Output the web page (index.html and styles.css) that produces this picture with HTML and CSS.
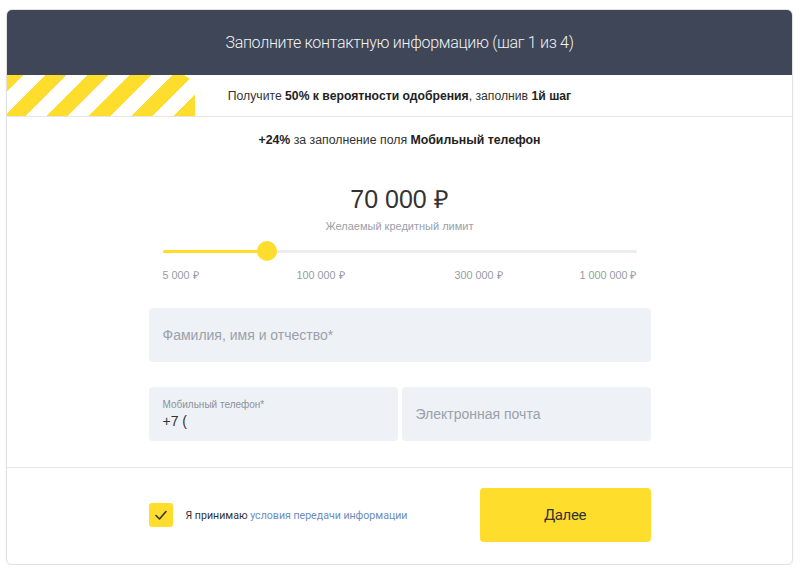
FILE: index.html
```html
<!DOCTYPE html>
<html lang="ru">
<head>
<meta charset="utf-8">
<title>Заполните контактную информацию</title>
<link rel="stylesheet" href="styles.css">
</head>
<body>
<div class="card">
  <div class="header">Заполните контактную информацию (шаг 1 из 4)</div>
  <div class="banner"><span>Получите <b>50% к вероятности одобрения</b>, заполнив <b>1й шаг</b></span></div>
  <div class="main">
    <div class="bonus"><b>+24%</b> за заполнение поля <b>Мобильный телефон</b></div>
    <div class="amount">70 000 ₽</div>
    <div class="amount-label">Желаемый кредитный лимит</div>
    <div class="slider">
      <div class="track"><div class="fill" style="width:22%"></div></div>
      <div class="thumb" style="left:22%"></div>
    </div>
    <div class="ticks">
      <span class="tick t1">5 000 ₽</span>
      <span class="tick t2">100 000 ₽</span>
      <span class="tick t3">300 000 ₽</span>
      <span class="tick t4">1 000 000 ₽</span>
    </div>
    <div class="field field-full"><span class="placeholder">Фамилия, имя и отчество*</span></div>
    <div class="row">
      <div class="field field-filled">
        <span class="field-label">Мобильный телефон*</span>
        <span class="field-value">+7 (</span>
      </div>
      <div class="field"><span class="placeholder">Электронная почта</span></div>
    </div>
  </div>
  <div class="footer">
    <div class="agree">
      <span class="checkbox">
        <svg width="14" height="12" viewBox="0 0 14 12"><polyline points="2,6.5 5.5,10 12,2.5" fill="none" stroke="#333" stroke-width="1.6" stroke-linecap="round" stroke-linejoin="round"/></svg>
      </span>
      <span class="agree-text">Я принимаю <a class="link" href="#">условия передачи информации</a></span>
    </div>
    <button class="next">Далее</button>
  </div>
</div>
</body>
</html>
```
FILE: styles.css
```css
* { box-sizing: border-box; }
html, body { margin: 0; padding: 0; background: #fff; }
body {
  font-family: "Liberation Sans", Arial, sans-serif;
  color: #333;
  padding: 9px 7px 0 6px;
}
.card {
  width: 787px;
  height: 556px;
  border: 1px solid #e2e2e2;
  border-radius: 6px;
  box-shadow: 0 1px 2px rgba(0,0,0,0.08);
  overflow: hidden;
  display: flex;
  flex-direction: column;
}
.header {
  height: 66px;
  margin: -1px -1px 0;
  background: #3e4657;
  color: #f2f3f5;
  font-family: Roboto, "Liberation Sans", sans-serif;
  font-weight: 300;
  font-size: 16px;
  letter-spacing: -0.3px;
  display: flex;
  align-items: center;
  justify-content: center;
  border-radius: 6px 6px 0 0;
}
.banner {
  position: relative;
  height: 42px;
  border-bottom: 1px solid #e6e6e6;
  display: flex;
  align-items: center;
  justify-content: center;
  font-size: 12.2px;
  color: #333;
}
.banner::before {
  content: "";
  position: absolute;
  left: 0;
  top: 0;
  width: 188px;
  height: 41px;
  background: repeating-linear-gradient(-45deg, #ffdd2d 0 15px, #fff 15px 30px);
  clip-path: polygon(0 0, 177px 0, 188px 7px, 188px 100%, 0 100%);
}
.banner b, .bonus b { font-weight: bold; color: #222; }
.main {
  border-bottom: 1px solid #e6e6e6;
  padding: 15px 0 26px;
  display: flex;
  flex-direction: column;
  align-items: center;
}
.bonus {
  font-size: 12.3px;
  line-height: 16px;
  color: #333;
}
.amount {
  margin-top: 37px;
  font-size: 25px;
  line-height: 28px;
  color: #333;
}
.amount-label {
  margin-top: 6px;
  font-size: 11px;
  line-height: 14px;
  color: #9aa0a8;
}
.slider {
  position: relative;
  width: 474px;
  height: 20px;
  margin-top: 8px;
  display: flex;
  align-items: center;
}
.track {
  width: 100%;
  height: 3px;
  background: #ededed;
  border-radius: 2px;
}
.fill {
  height: 3px;
  background: #ffdd2d;
  border-radius: 2px;
}
.thumb {
  position: absolute;
  top: 0;
  width: 20px;
  height: 20px;
  margin-left: -10px;
  border-radius: 50%;
  background: #ffdd2d;
}
.ticks {
  width: 474px;
  margin-top: 7px;
  display: grid;
  grid-template-columns: repeat(6, 1fr);
  font-size: 10.8px;
  line-height: 14px;
  color: #959ba4;
}
.tick { white-space: nowrap; }
.t1 { grid-column: 1; justify-self: start; }
.t2 { grid-column: 2 / 4; justify-self: center; }
.t3 { grid-column: 4 / 6; justify-self: center; }
.t4 { grid-column: 6; justify-self: end; }
.field {
  height: 54px;
  background: #eef1f5;
  border-radius: 4px;
  display: flex;
  flex-direction: column;
  justify-content: center;
  padding: 0 14px;
}
.field-full {
  width: 502px;
  margin-top: 26px;
}
.row {
  width: 502px;
  margin-top: 25px;
  display: grid;
  grid-template-columns: 1fr 1fr;
  gap: 4px;
}
.placeholder {
  font-size: 14px;
  color: #9ba1aa;
}
.field-label {
  font-size: 10px;
  line-height: 13px;
  color: #8b929b;
}
.field-value {
  font-size: 14px;
  line-height: 18px;
  color: #333;
  margin-top: 1px;
}
.footer {
  flex: 1;
  display: flex;
  align-items: center;
  justify-content: space-between;
  width: 502px;
  margin: 0 auto;
  padding-bottom: 2px;
}
.agree {
  display: flex;
  align-items: center;
  gap: 13px;
}
.checkbox {
  width: 24px;
  height: 24px;
  border-radius: 3px;
  background: #ffdd2d;
  display: flex;
  align-items: center;
  justify-content: center;
}
.agree-text {
  font-family: Roboto, "Liberation Sans", sans-serif;
  font-size: 10.6px;
  color: #333;
}
.link {
  color: #6b8ebd;
  text-decoration: none;
}
.next {
  width: 171px;
  height: 54px;
  border: none;
  border-radius: 4px;
  background: #ffdd2d;
  font-family: Roboto, "Liberation Sans", sans-serif;
  font-size: 15px;
  letter-spacing: -0.4px;
  color: #333;
  cursor: pointer;
}
```
